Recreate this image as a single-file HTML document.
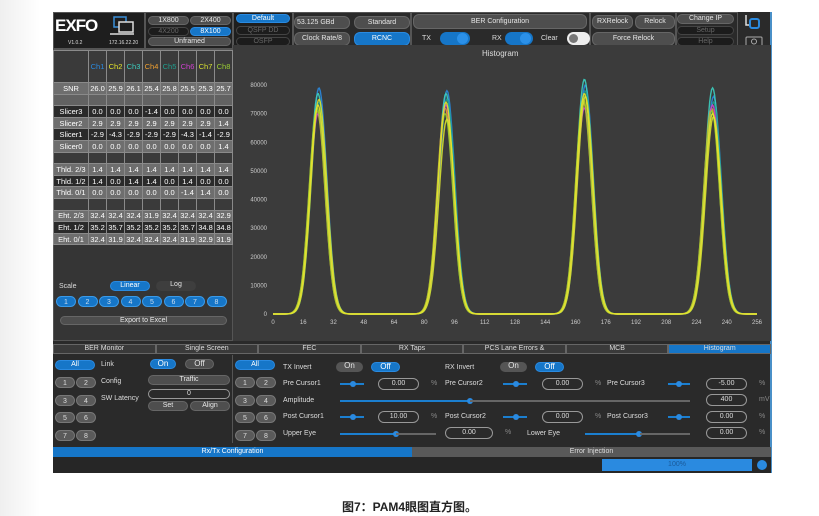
<!DOCTYPE html>
<html><head><meta charset="utf-8">
<style>
*{margin:0;padding:0;box-sizing:border-box}
body{width:819px;height:516px;background:#fff;position:relative;overflow:hidden;font-family:"Liberation Sans",sans-serif;color:#ddd}
.a{position:absolute}
.app{left:53px;top:12px;width:719px;height:461px;background:#2a2a2a;border-right:2px solid #4a90c8}
.b{position:absolute;border-radius:6px;background:#4e4e4e;color:#e6e6e6;font-size:7px;text-align:center;border:1px solid #666}
.bl{background:#1676c8;color:#fff;border-color:#2a8ae0}
.dk{background:#1c1c1c;color:#666;border-color:#444}
.t{position:absolute;font-size:7px;color:#ddd;white-space:nowrap}
table{border-collapse:collapse;position:absolute;left:53px;top:50px;font-size:7.5px;color:#fff}
td{border:1px solid #8a8a8a;text-align:center;height:11.6px;padding:0;width:18px}
td:first-child{width:35px}
tr.l td{background:#6e6e6e}
tr.d td{background:#2a2a2a}
tr.e td{background:#3a3a3a}
.rb{position:absolute;width:20px;height:11px;border-radius:6px;background:#5a5a5a;color:#ddd;font-size:7px;text-align:center;line-height:11px;border:1px solid #777}
.in{position:absolute;height:12px;border:1px solid #999;border-radius:7px;font-size:7px;text-align:center;line-height:10px;color:#ddd}
.sl{position:absolute;height:2px;background:#1b7fd0}
.kn{position:absolute;width:6px;height:6px;border-radius:3px;background:#2a8ae0}
</style></head><body>
<div class="a" style="left:0;top:0;width:40px;height:516px;background:linear-gradient(90deg,#efefef,#fff)"></div>
<div class="a app"></div>
<!-- header -->
<div class="a" style="left:53px;top:12px;width:92px;height:37px;background:#1e1e1e;border:1px solid #555"></div>
<div class="t" style="left:55px;top:16px;font-size:17px;font-weight:bold;color:#fff;letter-spacing:-1px">EXFO</div>
<svg class="a" style="left:108px;top:16px" width="28" height="20"><rect x="6" y="1" width="12" height="10" fill="none" stroke="#3a8fd8" stroke-width="1.5"/><rect x="11" y="6" width="14" height="10" fill="#1e1e1e" stroke="#ddd" stroke-width="1.5"/><line x1="2" y1="18" x2="26" y2="18" stroke="#ddd" stroke-width="1.5"/></svg>
<div class="t" style="left:68px;top:40px;font-size:5px">V1.0.2</div>
<div class="t" style="left:109px;top:40px;font-size:5px">172.16.22.20</div>
<div class="a" style="left:145px;top:12px;width:88px;height:37px;background:#222;border:1px solid #555"></div>
<div class="b" style="left:148px;top:16px;width:41px;height:9px;line-height:7px">1X800</div>
<div class="b" style="left:190px;top:16px;width:41px;height:9px;line-height:7px">2X400</div>
<div class="b dk" style="left:148px;top:27px;width:41px;height:9px;line-height:7px">4X200</div>
<div class="b bl" style="left:190px;top:27px;width:41px;height:9px;line-height:7px">8X100</div>
<div class="b" style="left:148px;top:37px;width:83px;height:9px;line-height:7px">Unframed</div>
<div class="a" style="left:233px;top:12px;width:60px;height:37px;background:#1e1e1e;border:1px solid #555"></div>
<div class="b bl" style="left:236px;top:14px;width:54px;height:9px;line-height:7px">Default</div>
<div class="b dk" style="left:236px;top:26px;width:54px;height:9px;line-height:7px">QSFP DD</div>
<div class="b dk" style="left:236px;top:37px;width:54px;height:9px;line-height:7px">OSFP</div>
<div class="a" style="left:293px;top:12px;width:118px;height:37px;background:#2a2a2a;border:1px solid #555"></div>
<div class="b" style="left:294px;top:16px;width:56px;height:13px;line-height:11px;text-align:left;padding-left:2px">53.125 GBd</div>
<div class="b" style="left:294px;top:32px;width:56px;height:14px;line-height:12px">Clock Rate/8</div>
<div class="b" style="left:354px;top:16px;width:56px;height:13px;line-height:11px">Standard</div>
<div class="b bl" style="left:354px;top:32px;width:56px;height:14px;line-height:12px">RCNC</div>
<div class="a" style="left:411px;top:12px;width:179px;height:37px;background:#2a2a2a;border:1px solid #555"></div>
<div class="b" style="left:413px;top:14px;width:174px;height:15px;line-height:13px">BER Configuration</div>
<div class="t" style="left:422px;top:35px">TX</div>
<div class="a" style="left:440px;top:32px;width:30px;height:13px;border-radius:7px;background:#1676c8"></div><div class="a" style="left:457px;top:33px;width:11px;height:11px;border-radius:6px;background:#2b90e8"></div>
<div class="t" style="left:492px;top:35px">RX</div>
<div class="a" style="left:505px;top:32px;width:28px;height:13px;border-radius:7px;background:#1676c8"></div><div class="a" style="left:520px;top:33px;width:11px;height:11px;border-radius:6px;background:#2b90e8"></div>
<div class="t" style="left:541px;top:35px">Clear</div>
<div class="a" style="left:567px;top:32px;width:23px;height:13px;border-radius:7px;background:#eee"></div><div class="a" style="left:569px;top:34px;width:9px;height:9px;border-radius:5px;background:#777"></div>
<div class="a" style="left:590px;top:12px;width:86px;height:37px;background:#2a2a2a;border:1px solid #555"></div>
<div class="b" style="left:592px;top:15px;width:41px;height:14px;line-height:12px">RXRelock</div>
<div class="b" style="left:635px;top:15px;width:40px;height:14px;line-height:12px">Relock</div>
<div class="b" style="left:592px;top:32px;width:83px;height:14px;line-height:12px">Force Relock</div>
<div class="a" style="left:676px;top:12px;width:62px;height:37px;background:#2a2a2a;border:1px solid #555"></div>
<div class="b" style="left:677px;top:14px;width:57px;height:10px;line-height:8px">Change IP</div>
<div class="b dk" style="left:677px;top:26px;width:57px;height:9px;line-height:7px">Setup</div>
<div class="b dk" style="left:677px;top:37px;width:57px;height:9px;line-height:7px">Help</div>
<svg class="a" style="left:742px;top:13px" width="26" height="34"><path d="M4 2v10h4" fill="none" stroke="#ddd" stroke-width="1.5"/><rect x="8" y="6" width="9" height="9" rx="2" fill="none" stroke="#2a8ae0" stroke-width="2"/><rect x="4" y="24" width="16" height="9" rx="1" fill="none" stroke="#aaa"/><circle cx="12" cy="28.5" r="2.5" fill="none" stroke="#aaa"/></svg>
<!-- left panel -->
<div class="a" style="left:53px;top:49px;width:180px;height:292px;background:#353535;border:1px solid #555"></div>
<table>
<tr class="e" style="height:32px"><td></td><td style="color:#2a8ae0">Ch1</td><td style="color:#e5e52a">Ch2</td><td style="color:#3ccfc0">Ch3</td><td style="color:#f0a030">Ch4</td><td style="color:#1f9f8f">Ch5</td><td style="color:#d040d0">Ch6</td><td style="color:#d8e030">Ch7</td><td style="color:#9acd32">Ch8</td></tr>
<tr class="l"><td>SNR</td><td>26.0</td><td>25.9</td><td>26.1</td><td>25.4</td><td>25.8</td><td>25.5</td><td>25.3</td><td>25.7</td></tr>
<tr class="l" style="opacity:.8"><td></td><td></td><td></td><td></td><td></td><td></td><td></td><td></td><td></td></tr>
<tr class="d"><td>Slicer3</td><td>0.0</td><td>0.0</td><td>0.0</td><td>-1.4</td><td>0.0</td><td>0.0</td><td>0.0</td><td>0.0</td></tr>
<tr class="l"><td>Slicer2</td><td>2.9</td><td>2.9</td><td>2.9</td><td>2.9</td><td>2.9</td><td>2.9</td><td>2.9</td><td>1.4</td></tr>
<tr class="d"><td>Slicer1</td><td>-2.9</td><td>-4.3</td><td>-2.9</td><td>-2.9</td><td>-2.9</td><td>-4.3</td><td>-1.4</td><td>-2.9</td></tr>
<tr class="l"><td>Slicer0</td><td>0.0</td><td>0.0</td><td>0.0</td><td>0.0</td><td>0.0</td><td>0.0</td><td>0.0</td><td>1.4</td></tr>
<tr class="e"><td></td><td></td><td></td><td></td><td></td><td></td><td></td><td></td><td></td></tr>
<tr class="l"><td>Thld. 2/3</td><td>1.4</td><td>1.4</td><td>1.4</td><td>1.4</td><td>1.4</td><td>1.4</td><td>1.4</td><td>1.4</td></tr>
<tr class="d"><td>Thld. 1/2</td><td>1.4</td><td>0.0</td><td>1.4</td><td>1.4</td><td>0.0</td><td>1.4</td><td>0.0</td><td>0.0</td></tr>
<tr class="l"><td>Thld. 0/1</td><td>0.0</td><td>0.0</td><td>0.0</td><td>0.0</td><td>0.0</td><td>-1.4</td><td>1.4</td><td>0.0</td></tr>
<tr class="e"><td></td><td></td><td></td><td></td><td></td><td></td><td></td><td></td><td></td></tr>
<tr class="l"><td>Eht. 2/3</td><td>32.4</td><td>32.4</td><td>32.4</td><td>31.9</td><td>32.4</td><td>32.4</td><td>32.4</td><td>32.9</td></tr>
<tr class="d"><td>Eht. 1/2</td><td>35.2</td><td>35.7</td><td>35.2</td><td>35.2</td><td>35.2</td><td>35.7</td><td>34.8</td><td>34.8</td></tr>
<tr class="l"><td>Eht. 0/1</td><td>32.4</td><td>31.9</td><td>32.4</td><td>32.4</td><td>32.4</td><td>31.9</td><td>32.9</td><td>31.9</td></tr>
</table>
<div class="t" style="left:59px;top:283px">Scale</div>
<div class="b bl" style="left:110px;top:281px;width:40px;height:10px;line-height:8px;border-radius:5px">Linear</div>
<div class="b" style="left:156px;top:281px;width:40px;height:10px;line-height:8px;background:#3e3e3e;border:none">Log</div>
<div id="chb"></div>
<div class="b" style="left:60px;top:316px;width:167px;height:9px;line-height:8px;border-radius:5px">Export to Excel</div>
<!-- chart -->
<div class="a" style="left:233px;top:45px;width:538px;height:296px;background:#3b3b3b"></div>
<div class="t" style="left:482px;top:49px;font-size:8px">Histogram</div>
<svg class="a" style="left:233px;top:45px" width="538" height="296" id="ch"></svg>
<!-- tabs -->
<div id="tabs"></div>
<!-- controls -->
<div class="a" style="left:232px;top:355px;width:1px;height:88px;background:#555"></div>
<div class="b bl" style="left:55px;top:360px;width:40px;height:10px;line-height:8px">All</div>
<div class="t" style="left:101px;top:361px">Link</div>
<div class="b bl" style="left:150px;top:359px;width:26px;height:10px;line-height:8px;font-size:8px">On</div>
<div class="b" style="left:185px;top:359px;width:29px;height:10px;line-height:8px;font-size:8px">Off</div>
<div class="t" style="left:101px;top:378px">Config</div>
<div class="b" style="left:148px;top:375px;width:82px;height:10px;line-height:8px">Traffic</div>
<div class="t" style="left:101px;top:395px">SW Latency</div>
<div class="in" style="left:148px;top:389px;width:82px;height:10px;line-height:8px">0</div>
<div class="b" style="left:148px;top:401px;width:40px;height:10px;line-height:8px">Set</div>
<div class="b" style="left:190px;top:401px;width:40px;height:10px;line-height:8px">Align</div>
<div class="b bl" style="left:235px;top:360px;width:40px;height:10px;line-height:8px">All</div>
<div id="nums"></div>
<div class="t" style="left:283px;top:364px">TX Invert</div>
<div class="b" style="left:336px;top:362px;width:27px;height:10px;line-height:8px;font-size:8px;background:#555;border:none">On</div>
<div class="b bl" style="left:371px;top:362px;width:29px;height:10px;line-height:8px;font-size:8px">Off</div>
<div class="t" style="left:445px;top:364px">RX Invert</div>
<div class="b" style="left:500px;top:362px;width:27px;height:10px;line-height:8px;font-size:8px;background:#555;border:none">On</div>
<div class="b bl" style="left:535px;top:362px;width:29px;height:10px;line-height:8px;font-size:8px">Off</div>
<div class="t" style="left:283px;top:380px">Pre Cursor1</div>
<div class="t" style="left:445px;top:380px">Pre Cursor2</div>
<div class="t" style="left:607px;top:380px">Pre Cursor3</div>
<div class="t" style="left:283px;top:397px">Amplitude</div>
<div class="t" style="left:283px;top:413px">Post Cursor1</div>
<div class="t" style="left:445px;top:413px">Post Cursor2</div>
<div class="t" style="left:607px;top:413px">Post Cursor3</div>
<div class="t" style="left:283px;top:430px">Upper Eye</div>
<div class="t" style="left:527px;top:430px">Lower Eye</div>
<div id="ctl"></div>
<!-- bottom bars -->
<div class="a" style="left:53px;top:447px;width:359px;height:10px;background:#1676c8;color:#fff;font-size:7px;text-align:center;line-height:10px">Rx/Tx Configuration</div>
<div class="a" style="left:412px;top:447px;width:359px;height:10px;background:#595959;color:#ddd;font-size:7px;text-align:center;line-height:10px">Error Injection</div>
<div class="a" style="left:53px;top:457px;width:718px;height:16px;background:#262626"></div>
<div class="a" style="left:602px;top:459px;width:150px;height:12px;background:#2a8ae0;color:#1a5a9a;font-size:7px;text-align:center;line-height:12px">100%</div>
<div class="a" style="left:757px;top:460px;width:10px;height:10px;border-radius:5px;background:#2a8ae0"></div>
<div class="a" style="left:0;top:498px;width:819px;text-align:center;font-size:12px;font-weight:bold;color:#222;font-family:'Liberation Sans','Noto Sans CJK SC',sans-serif">图7：PAM4眼图直方图。</div>
<script>
var h='';
for(var i=0;i<8;i++)h+='<div class="rb" style="left:'+(56+i*21.5)+'px;top:296px;background:#1676c8;border-color:#3a9ae8;color:#cde">'+(i+1)+'</div>';
document.getElementById('chb').innerHTML=h;
var tn=['BER Monitor','Single Screen','FEC','RX Taps','PCS Lane Errors &','MCB','Histogram'];
h='';var w=718/7;
for(i=0;i<7;i++)h+='<div class="a" style="left:'+(53+i*w)+'px;top:344px;width:'+w+'px;height:10px;background:'+(i==6?'#1676c8':'#3a3a3a')+';border:1px solid #666;font-size:7px;text-align:center;line-height:8px;color:#ddd">'+tn[i]+'</div>';
document.getElementById('tabs').innerHTML=h;
h='';
[[55],[235]].forEach(function(x){x=x[0];for(var r=0;r<4;r++){var y=377+r*17.5;h+='<div class="rb" style="left:'+x+'px;top:'+y+'px">'+(r*2+1)+'</div><div class="rb" style="left:'+(x+21)+'px;top:'+y+'px">'+(r*2+2)+'</div>';}});
document.getElementById('nums').innerHTML=h;
h='';
function sl(x,y,w,k){return '<div class="sl" style="left:'+x+'px;top:'+y+'px;width:'+w+'px"></div><div class="kn" style="left:'+k+'px;top:'+(y-2)+'px"></div>';}
function inp(x,y,w,v,u){return '<div class="in" style="left:'+x+'px;top:'+(y-6)+'px;width:'+w+'px">'+v+'</div><div class="t" style="left:'+(x+w+12)+'px;top:'+(y-4)+'px;color:#888">'+u+'</div>';}
h+=sl(340,383,24,350)+inp(378,384,41,'0.00','%');
h+=sl(503,383,24,513)+inp(542,384,41,'0.00','%');
h+=sl(668,383,22,676)+inp(706,384,41,'-5.00','%');
h+=sl(340,400,130,467)+'<div class="sl" style="left:470px;top:400px;width:220px;background:#666"></div>'+inp(706,400,41,'400','mV');
h+=sl(340,416,24,350)+inp(378,417,41,'10.00','%');
h+=sl(503,416,24,513)+inp(542,417,41,'0.00','%');
h+=sl(668,416,22,676)+inp(706,417,41,'0.00','%');
h+=sl(340,433,55,393)+'<div class="sl" style="left:396px;top:433px;width:40px;background:#666"></div>'+inp(445,433,48,'0.00','%');
h+=sl(585,433,53,636)+'<div class="sl" style="left:640px;top:433px;width:50px;background:#666"></div>'+inp(706,433,41,'0.00','%');
document.getElementById('ctl').innerHTML=h;
var s='';var X0=273-233,Y0=314-45,sx=484/256,sy=229/80000;
for(var v=0;v<=80000;v+=10000)s+='<text x="'+(X0-6)+'" y="'+(Y0-v*sy+2)+'" fill="#ccc" font-size="6" text-anchor="end" font-family="Liberation Sans">'+v+'</text>';
for(v=0;v<=256;v+=16)s+='<text x="'+(X0+v*sx)+'" y="'+(Y0+10)+'" fill="#ccc" font-size="6" text-anchor="middle" font-family="Liberation Sans">'+v+'</text>';
var cols=['#2a8ae0','#3ccfc0','#f0a030','#1f9f8f','#d040d0','#9acd32','#d8e030','#e5e52a'];
var cen=[23.8,91.5,164.7,232.5];
var hts=[[79,77,71,74,70,72,75,73],[78,77,72,75,73,70,68,74],[80,82,74,78,72,75,76,77],[76,79,72,74,73,71,69,70]];
for(var c=0;c<8;c++){var p='';for(var xx=0;xx<=256;xx+=0.5){var y=0;for(var k=0;k<4;k++){var d=xx-cen[k]+(c%3-1)*0.5;y+=hts[k][c]*1000*Math.exp(-d*d/(2*4.2*4.2));}p+=(xx?'L':'M')+(X0+xx*sx).toFixed(1)+' '+(Y0-y*sy).toFixed(1);}
s+='<path d="'+p+'" fill="none" stroke="'+cols[c]+'" stroke-width="1.4" opacity="0.9"/>';}
document.getElementById('ch').innerHTML=s;
</script>
</body></html>
